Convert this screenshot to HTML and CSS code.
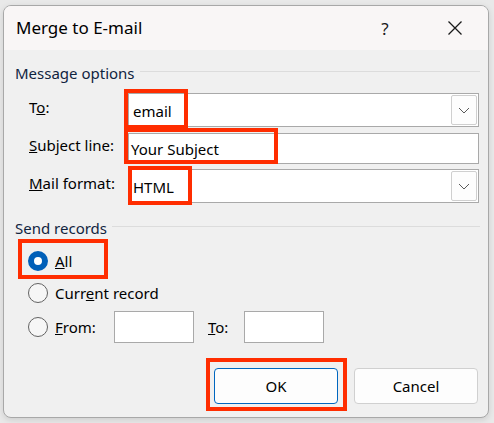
FILE: index.html
```html
<!DOCTYPE html>
<html>
<head>
<meta charset="utf-8">
<link rel="stylesheet" href="styles.css">
</head>
<body>
<div class="window">
  <div class="titlebar">
    <span class="title">Merge to E-mail</span>
    <span class="help">?</span>
    <span class="close"><svg width="16" height="16" viewBox="0 0 16 16"><path d="M1.5 1.5 L14.5 14.5 M14.5 1.5 L1.5 14.5" stroke="#1a1a1a" stroke-width="1.3" fill="none"/></svg></span>
  </div>
  <div class="body">
    <div class="group-head"><span class="gtext">Message options</span><span class="rule"></span></div>
    <div class="rows">
      <div class="row row-to">
        <span class="lbl">T<u>o</u>:</span>
        <div class="field combo"><span class="val">email</span><span class="dd"><svg width="12" height="7" viewBox="0 0 12 7"><path d="M1 1 L6 6 L11 1" stroke="#5a5a5a" stroke-width="1" fill="none"/></svg></span></div>
      </div>
      <div class="row row-subj">
        <span class="lbl"><u>S</u>ubject line:</span>
        <div class="field text"><span class="val">Your Subject</span></div>
      </div>
      <div class="row row-fmt">
        <span class="lbl"><u>M</u>ail format:</span>
        <div class="field combo"><span class="val">HTML</span><span class="dd"><svg width="12" height="7" viewBox="0 0 12 7"><path d="M1 1 L6 6 L11 1" stroke="#5a5a5a" stroke-width="1" fill="none"/></svg></span></div>
      </div>
    </div>
    <div class="group-head g2"><span class="gtext">Send records</span><span class="rule"></span></div>
    <div class="radios">
      <div class="rrow r1"><span class="radio on"></span><span class="rlbl"><u>A</u>ll</span></div>
      <div class="rrow r2"><span class="radio"></span><span class="rlbl">Curr<u>e</u>nt record</span></div>
      <div class="rrow r3"><span class="radio"></span><span class="rlbl from"><u>F</u>rom:</span><span class="box"></span><span class="tolbl"><u>T</u>o:</span><span class="box"></span></div>
    </div>
    <div class="buttons">
      <span class="btn ok">OK</span>
      <span class="btn">Cancel</span>
    </div>
  </div>
  <span class="mark m1"></span>
  <span class="mark m2"></span>
  <span class="mark m3"></span>
  <span class="mark m4"></span>
  <span class="mark m5"></span>
</div>
</body>
</html>
```

FILE: styles.css
```css
html, body {
  margin: 0;
  padding: 0;
}
body {
  background: #e9e9e9;
  width: 494px;
  height: 423px;
  overflow: hidden;
  font-family: "Noto Sans", "Open Sans", sans-serif;
  font-size: 15px;
  color: #000;
}
.window {
  position: relative;
  box-sizing: border-box;
  margin: 5px 0 0 3px;
  width: 486px;
  height: 413px;
  border: 1px solid #a8a8a8;
  border-radius: 8px;
  overflow: hidden;
  background: #f0f0f0;
  box-shadow: 0 2px 6px rgba(0,0,0,0.12);
}
.titlebar {
  height: 44px;
  background: #f9f6f6;
  display: flex;
  align-items: center;
}
.title {
  margin-left: 12px;
  font-size: 17px;
  flex: 1;
  margin-top: -1px;
}
.help {
  font-size: 17px;
  width: 20px;
  text-align: center;
  margin-right: 52px;
  color: #1a1a1a;
}
.close {
  display: flex;
  margin-right: 25px;
}
.body {
  padding: 14px 8px 0 11px;
}
.group-head {
  display: flex;
  align-items: center;
  height: 18px;
  line-height: 18px;
}
.gtext {
  color: #10243f;
}
.rule {
  flex: 1;
  height: 1px;
  background: #dcdcdc;
  margin-left: 5px;
  margin-top: -3px;
}
.rows {
  margin-top: 11px;
  padding-left: 14px;
}
.row {
  display: flex;
  align-items: center;
}
.lbl {
  width: 99px;
  margin-top: -7px;
}
.field {
  box-sizing: border-box;
  width: 351px;
  background: #fff;
  border: 1px solid #a9a9a9;
  display: flex;
  align-items: center;
}
.row-to .field { height: 34px; }
.row-subj { margin-top: 6px; }
.row-subj .field { height: 31px; }
.row-fmt { margin-top: 5px; }
.row-fmt .field { height: 34px; }
.val {
  flex: 1;
  padding-left: 4px;
  margin-top: 1px;
}
.row-subj .val { padding-left: 2px; }
.dd {
  box-sizing: border-box;
  width: 26px;
  height: 30px;
  margin-right: 1px;
  border: 1px solid #cfcfcf;
  border-radius: 2px;
  background: #fdfdfd;
  display: flex;
  align-items: center;
  justify-content: center;
}
.g2 {
  margin-top: 16px;
}
.g2 .rule {
  margin-left: 5px;
}
.radios {
  margin-top: 12px;
  padding-left: 13px;
}
.rrow {
  display: flex;
  align-items: center;
}
.r1, .r2 { height: 24px; }
.r2 { margin-top: 8px; }
.r3 { margin-top: 5px; height: 33px; }
.radio {
  box-sizing: border-box;
  width: 20px;
  height: 20px;
  border-radius: 50%;
  border: 1px solid #626262;
  background: #f6f6f6;
  margin-right: 7px;
}
.radio.on {
  border: 6px solid #005fb8;
  background: #fff;
}
.from {
  width: 59px;
}
.box {
  box-sizing: border-box;
  width: 80px;
  height: 32px;
  background: #fff;
  border: 1px solid #a9a9a9;
}
.tolbl {
  margin-left: 14px;
  width: 36px;
}
.buttons {
  margin-top: 25px;
  display: flex;
  justify-content: flex-end;
  gap: 16px;
  padding-right: 2px;
}
.btn {
  box-sizing: border-box;
  width: 124px;
  height: 36px;
  border: 1px solid #d0d0d0;
  border-radius: 4px;
  background: #fdfdfd;
  display: flex;
  align-items: center;
  justify-content: center;
}
.btn.ok {
  border-color: #0067c0;
}
.mark {
  position: absolute;
  box-sizing: border-box;
  border: 4px solid #ff2d00;
}
.m1 { left: 120px; top: 83px; width: 64px; height: 40px; }
.m2 { left: 120px; top: 122px; width: 154px; height: 36px; }
.m3 { left: 124px; top: 160px; width: 64px; height: 39px; }
.m4 { left: 14px; top: 233px; width: 90px; height: 40px; }
.m5 { left: 202px; top: 352px; width: 141px; height: 53px; }
```
